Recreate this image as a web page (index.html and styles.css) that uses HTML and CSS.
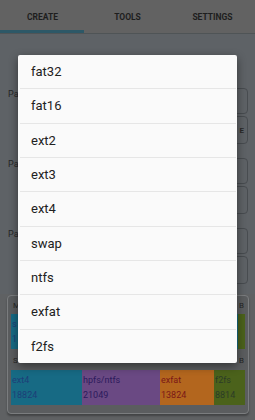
FILE: index.html
```html
<!DOCTYPE html>
<html>
<head>
<meta charset="utf-8">
<link rel="stylesheet" href="styles.css">
</head>
<body>
<div class="app">
  <div class="tabs">
    <div class="tab">CREATE</div>
    <div class="tab">TOOLS</div>
    <div class="tab">SETTINGS</div>
  </div>
  <div class="track"><div class="indicator"></div></div>

  <div class="form">
    <div class="group">
      <div class="label">Pa</div>
      <div class="fields">
        <div class="box b1"></div>
        <div class="box b2"><span>E</span></div>
      </div>
    </div>
    <div class="group">
      <div class="label">Pa</div>
      <div class="fields">
        <div class="box b1"></div>
        <div class="box b2"></div>
      </div>
    </div>
    <div class="group">
      <div class="label">Pa</div>
      <div class="fields">
        <div class="box b1"></div>
        <div class="box b2"></div>
      </div>
    </div>
  </div>

  <div class="card">
    <div class="caption"><span>M</span><span>B</span></div>
    <div class="bar">
      <div class="seg blue grow"><span>s</span><span>1</span></div>
      <div class="seg olive" style="width:7px"></div>
    </div>
    <div class="caption"><span>S</span><span>B</span></div>
    <div class="bar">
      <div class="seg blue" style="width:71px"><span>ext4</span><span>18824</span></div>
      <div class="seg purple" style="width:78px"><span>hpfs/ntfs</span><span>21049</span></div>
      <div class="seg orange" style="width:54px"><span>exfat</span><span>13824</span></div>
      <div class="seg olive grow"><span>f2fs</span><span>8814</span></div>
    </div>
  </div>

  <div class="dialog">
    <div class="item">fat32</div>
    <div class="item">fat16</div>
    <div class="item">ext2</div>
    <div class="item">ext3</div>
    <div class="item">ext4</div>
    <div class="item">swap</div>
    <div class="item">ntfs</div>
    <div class="item">exfat</div>
    <div class="item">f2fs</div>
  </div>
</div>
</body>
</html>
```

FILE: styles.css
```css
* { box-sizing: border-box; }
html, body { margin: 0; padding: 0; }
body {
  width: 255px;
  height: 420px;
  overflow: hidden;
  background: #5f6163;
  font-family: Roboto, "Liberation Sans", sans-serif;
}
.app {
  position: relative;
  width: 255px;
  height: 420px;
}
.tabs {
  display: grid;
  grid-template-columns: repeat(3, 1fr);
  height: 30px;
  background: #626262;
}
.tab {
  display: flex;
  align-items: center;
  justify-content: center;
  font-size: 8.5px;
  font-weight: bold;
  color: #1e1e1e;
  padding-top: 4px;
}
.track {
  height: 4px;
  background: #626262;
  border-bottom: 1px solid #4f5456;
}
.indicator {
  width: 84px;
  height: 3px;
  background: #2d5867;
}
.form {
  display: flex;
  flex-direction: column;
  gap: 14px;
  padding: 54px 7px 0 8px;
  background: #5e6266;
  height: 260px;
}
.group {
  display: flex;
  justify-content: space-between;
}
.label {
  font-size: 9px;
  color: #262626;
  padding-top: 1px;
  white-space: nowrap;
}
.fields {
  width: 130px;
  display: flex;
  flex-direction: column;
  gap: 2px;
}
.box {
  border: 1px solid #484c50;
  border-radius: 4px;
  display: flex;
  align-items: center;
  justify-content: flex-end;
  padding-right: 3px;
  font-size: 8px;
  font-weight: bold;
  color: #2a2a2a;
}
.b1 { height: 26px; }
.b2 { height: 28px; }
.card {
  position: absolute;
  left: 7px;
  top: 295px;
  width: 242px;
  height: 119px;
  border: 1px solid #7b7d7f;
  border-radius: 4px;
  background: #5b5d5f;
  padding: 2px 3px 0 3px;
  box-shadow: 0 2px 2px rgba(0,0,0,0.3);
}
.caption {
  display: flex;
  justify-content: space-between;
  font-size: 8px;
  color: #262626;
  height: 15px;
  align-items: center;
  padding: 0 1px 0 2px;
}
.caption + .bar { margin-top: 1px; }
.bar + .caption { margin-top: 3px; height: 17px; }
.bar {
  display: flex;
  height: 35px;
}
.seg {
  display: flex;
  flex-direction: column;
  justify-content: space-around;
  padding: 2px 1px;
  font-size: 9px;
  white-space: nowrap;
  overflow: hidden;
}
.grow { flex: 1; }
.blue { background: #176a84; color: #1d3e78; }
.purple { background: #6a4983; color: #2c1a5c; }
.orange { background: #b3661e; color: #7a1717; }
.olive { background: #4b621b; color: #2b3c26; }
.dialog {
  position: absolute;
  left: 18px;
  top: 55px;
  width: 219px;
  height: 308px;
  background: #fafafa;
  border-radius: 2px;
  box-shadow: 0 3px 10px rgba(0,0,0,0.45);
  display: flex;
  flex-direction: column;
}
.item {
  flex: 1;
  display: flex;
  align-items: center;
  padding-left: 11px;
  font-size: 13px;
  color: #212121;
  border-bottom: 1px solid #e6e6e6;
  margin: 0 1px 0 2px;
}
.item:last-child { border-bottom: none; }
```
